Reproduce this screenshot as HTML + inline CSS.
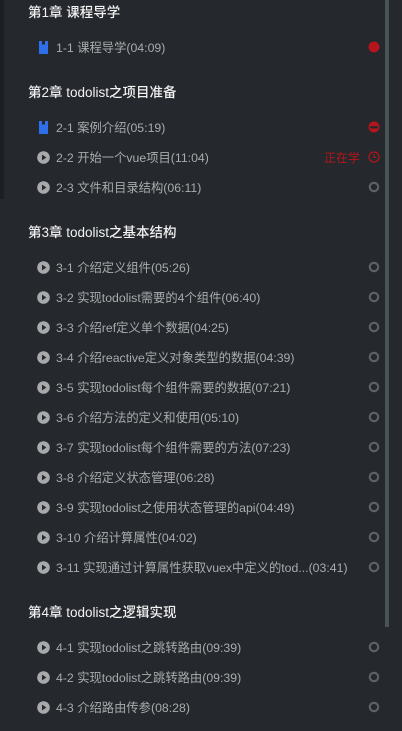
<!DOCTYPE html>
<html><head><meta charset="utf-8"><style>
body{margin:0;width:402px;height:731px;overflow:hidden;background:#25282c;font-family:"Liberation Sans","Noto Sans CJK SC",sans-serif;position:relative}
.l{position:absolute;left:0;top:0;width:4px;height:199px;background:#1d2023}
.sb{position:absolute;left:385px;top:0;width:4px;height:627px;background:#4c5358}
.ch{position:absolute;left:28px;font-size:13.5px;color:#f2f2f2;line-height:16px;transform:translateY(-7px);font-weight:500}
.it{position:absolute;left:37px;height:16px;transform:translateY(-7px);color:#a9abad;font-size:12.3px;line-height:16px;white-space:nowrap}
.it span{position:absolute;left:19px;top:0}
.ic{position:absolute;left:0;top:1px;width:13px;height:13px}
.st{position:absolute;left:368px;width:12px;height:12px;transform:translateY(-6px)}
.now{position:absolute;left:324px;font-size:12px;color:#b3161c;line-height:16px;transform:translateY(-7px)}
</style></head><body>
<div class="l"></div><div class="sb"></div>
<div class="ch" style="top:12px">第1章 课程导学</div>
<div class="ch" style="top:92px">第2章 todolist之项目准备</div>
<div class="ch" style="top:232px">第3章 todolist之基本结构</div>
<div class="ch" style="top:612px">第4章 todolist之逻辑实现</div>
<div id="items"></div>
<div class="now" style="top:157px">正在学</div>
<script>
var book='<svg class="ic" viewBox="0 0 13 13"><path d="M2 0H5V4L6.5 3L8 4V0H11V13H2Z" fill="#2f6fe9"/></svg>';
var play='<svg class="ic" viewBox="0 0 13 13"><circle cx="6.5" cy="6.5" r="6.3" fill="#a7a9ab"/><path d="M5 3.6V9.4L9.4 6.5Z" fill="#25282c"/></svg>';
var ring='<svg class="st" viewBox="0 0 12 12"><circle cx="6" cy="6" r="4.2" fill="none" stroke="#5d6165" stroke-width="2.2"/></svg>';
var full='<svg class="st" viewBox="0 0 12 12"><circle cx="6" cy="6" r="5.5" fill="#b3161c"/></svg>';
var half='<svg class="st" viewBox="0 0 12 12"><circle cx="6" cy="6" r="5.5" fill="#b3161c"/><rect x="2" y="5.2" width="8" height="2.2" fill="#25282c"/></svg>';
var clk='<svg class="st" viewBox="0 0 12 12"><circle cx="6" cy="6" r="5" fill="none" stroke="#b3161c" stroke-width="1.2"/><path d="M6 3V6.5H8.3" fill="none" stroke="#b3161c" stroke-width="1.1"/></svg>';
var d=[[47,book,'1-1 课程导学(04:09)',full],[127,book,'2-1 案例介绍(05:19)',half],[157,play,'2-2 开始一个vue项目(11:04)',clk],[187,play,'2-3 文件和目录结构(06:11)',ring]];
var t3=['3-1 介绍定义组件(05:26)','3-2 实现todolist需要的4个组件(06:40)','3-3 介绍ref定义单个数据(04:25)','3-4 介绍reactive定义对象类型的数据(04:39)','3-5 实现todolist每个组件需要的数据(07:21)','3-6 介绍方法的定义和使用(05:10)','3-7 实现todolist每个组件需要的方法(07:23)','3-8 介绍定义状态管理(06:28)','3-9 实现todolist之使用状态管理的api(04:49)','3-10 介绍计算属性(04:02)','3-11 实现通过计算属性获取vuex中定义的tod...(03:41)'];
t3.forEach(function(s,i){d.push([267+30*i,play,s,ring])});
['4-1 实现todolist之跳转路由(09:39)','4-2 实现todolist之跳转路由(09:39)','4-3 介绍路由传参(08:28)'].forEach(function(s,i){d.push([647+30*i,play,s,ring])});
var h='';d.forEach(function(r){h+='<div class="it" style="top:'+r[0]+'px">'+r[1]+'<span>'+r[2]+'</span></div><div style="position:absolute;top:'+r[0]+'px;left:0">'+r[3]+'</div>'});
document.getElementById('items').innerHTML=h;
</script>
</body></html>
